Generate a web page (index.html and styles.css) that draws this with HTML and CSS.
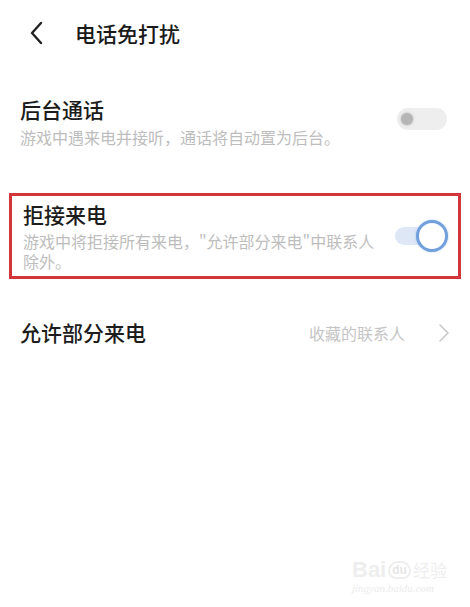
FILE: index.html
```html
<!DOCTYPE html>
<html lang="zh-CN">
<head>
<meta charset="utf-8">
<link rel="stylesheet" href="styles.css">
</head>
<body>
<div class="page">
  <header class="header">
    <svg class="back" width="16" height="24" viewBox="0 0 16 24"><path d="M12 2 L3 12 L12 22" fill="none" stroke="#222" stroke-width="2.4" stroke-linecap="round" stroke-linejoin="round"/></svg>
    <h1 class="title">电话免打扰</h1>
  </header>

  <section class="row row-bg">
    <div class="text">
      <div class="label">后台通话</div>
      <div class="sub">游戏中遇来电并接听，通话将自动置为后台。</div>
    </div>
    <div class="switch off"><span class="knob"></span></div>
  </section>

  <section class="row row-reject">
    <div class="text">
      <div class="label">拒接来电</div>
      <div class="sub sub-wrap">游戏中将拒接所有来电，"允许部分来电"中联系人除外。</div>
    </div>
    <div class="switch on"><span class="knob"></span></div>
  </section>

  <section class="row row-allow">
    <div class="label">允许部分来电</div>
    <div class="value">收藏的联系人</div>
    <svg class="chev" width="12" height="18" viewBox="0 0 12 18"><path d="M2 1 L10 9 L2 17" fill="none" stroke="#c8c8c8" stroke-width="1.6" stroke-linecap="round" stroke-linejoin="round"/></svg>
  </section>

  <div class="watermark">
    <div class="wm-top"><span class="wm-bai">Bai</span><span class="wm-du">du</span><span class="wm-jy">经验</span></div>
    <div class="wm-url">jingyan.baidu.com</div>
  </div>
</div>
</body>
</html>
```
FILE: styles.css
```css
* { box-sizing: border-box; }
html, body { margin: 0; padding: 0; background: #fff; }
body {
  font-family: "Noto Sans CJK SC", "Noto Sans", sans-serif;
  color: #1a1a1a;
}
.page {
  position: relative;
  width: 470px;
  height: 607px;
  overflow: hidden;
}
.header {
  display: flex;
  align-items: center;
  height: 68px;
  padding-left: 29px;
}
.back { display: block; margin-top: -2px; }
.title {
  margin: -2px 0 0 30px;
  font-size: 21px;
  font-weight: 500;
  line-height: 31px;
  color: #1a1a1a;
}
.row {
  display: flex;
  align-items: flex-start;
}
.text { flex: 1; }
.label {
  font-size: 21px;
  line-height: 31px;
  font-weight: 500;
  color: #1c1c1c;
}
.sub {
  font-size: 16px;
  line-height: 20px;
  margin-top: 2px;
  color: #bdbdbd;
}
.sub-wrap { max-width: 360px; line-height: 19.5px; }

.row-bg {
  padding: 26px 23px 0 20px;
}
.row-bg .switch { margin-top: 14px; }

.row-reject {
  margin: 46px 9px 0 9px;
  border: 3px solid #d2353c;
  height: 86px;
  padding: 3px 10px 0 11px;
}
.row-reject .switch { margin-top: 21px; }

.row-allow {
  margin-top: 38px;
  padding: 0 20px 0 20px;
  height: 31px;
  align-items: center;
}
.row-allow .label { flex: 1; }
.value {
  font-size: 16px;
  line-height: 22px;
  color: #c4c4c4;
  margin-right: 33px;
}
.chev { display: block; }

.switch {
  position: relative;
  flex: none;
}
.switch.off {
  width: 50px;
  height: 22px;
  border-radius: 11px;
  background: #eeeeee;
}
.switch.off .knob {
  position: absolute;
  left: 4px;
  top: 5px;
  width: 12px;
  height: 12px;
  border-radius: 50%;
  background: #b5b5b5;
  box-shadow: 0 0 2px 1px #d4d4d4;
}
.switch.on {
  width: 53px;
  height: 32px;
}
.switch.on::before {
  content: "";
  position: absolute;
  left: 0;
  top: 7px;
  width: 38px;
  height: 18px;
  border-radius: 9px 0 0 9px;
  background: #dde7f6;
}
.switch.on .knob {
  position: absolute;
  right: 0;
  top: 0;
  width: 32px;
  height: 32px;
  border-radius: 50%;
  background: #fff;
  border: 3px solid #72a0dc;
  box-shadow: 0 0 2px rgba(90, 140, 210, 0.5);
}

.watermark {
  position: absolute;
  left: 352px;
  top: 558px;
  color: #ececec;
  font-family: "Liberation Sans", sans-serif;
}
.wm-top { display: flex; align-items: flex-end; line-height: 24px; }
.wm-bai { font-size: 22px; font-weight: bold; color: #eeeeee; }
.wm-du {
  font-size: 12px;
  font-weight: bold;
  color: #e6e6e6;
  border: 2px solid #eeeeee;
  border-radius: 10px 10px 8px 8px;
  padding: 0 2px;
  line-height: 14px;
  margin: 0 2px 3px;
}
.wm-jy { font-family: "Noto Sans CJK SC", sans-serif; font-size: 17px; color: #eeeeee; }
.wm-url {
  font-family: "Liberation Serif", serif;
  font-style: italic;
  font-size: 11px;
  color: #ebebeb;
  line-height: 12px;
}
```
